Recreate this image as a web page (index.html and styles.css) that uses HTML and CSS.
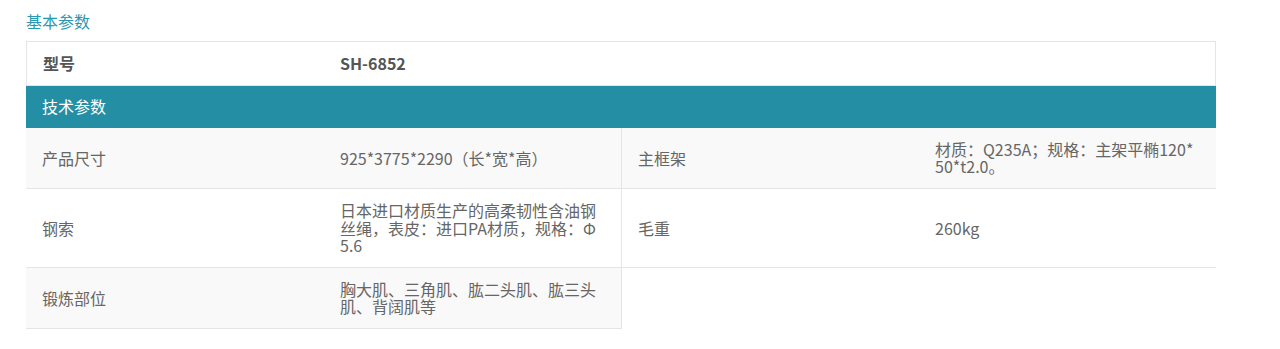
FILE: index.html
```html
<!DOCTYPE html>
<html lang="zh-CN">
<head>
<meta charset="utf-8">
<title>基本参数</title>
<link rel="stylesheet" href="styles.css">
</head>
<body>
<div class="page">
  <h2 class="title">基本参数</h2>
  <table class="params">
    <colgroup><col class="c-wide"><col class="c-wide"><col class="c-narrow"><col class="c-narrow"></colgroup>
    <tbody>
      <tr class="model">
        <th class="first">型号</th>
        <td class="last" colspan="3">SH-6852</td>
      </tr>
      <tr class="section">
        <th colspan="4">技术参数</th>
      </tr>
      <tr class="row alt">
        <th>产品尺寸</th>
        <td class="split">925*3775*2290（长*宽*高）</td>
        <th>主框架</th>
        <td>材质：Q235A；规格：主架平椭120*50*t2.0。</td>
      </tr>
      <tr class="row">
        <th>钢索</th>
        <td class="split">日本进口材质生产的高柔韧性含油钢丝绳，表皮：进口PA材质，规格：Φ5.6</td>
        <th>毛重</th>
        <td>260kg</td>
      </tr>
      <tr class="row alt">
        <th>锻炼部位</th>
        <td class="split">胸大肌、三角肌、肱二头肌、肱三头肌、背阔肌等</td>
        <td class="empty" colspan="2"></td>
      </tr>
    </tbody>
  </table>
</div>
</body>
</html>
```
FILE: styles.css
```css
html, body {
  margin: 0;
  padding: 0;
  background: #ffffff;
}

body {
  font-family: "Noto Sans CJK SC", "Microsoft YaHei", "Noto Sans", sans-serif;
  font-size: 16px;
  line-height: 17px;
  color: #666666;
}

.page {
  padding: 13px 26px 0 26px;
}

.title {
  margin: 0 0 11px 0;
  font-size: 16px;
  line-height: 17px;
  font-weight: normal;
  color: #2a98b1;
}

.params {
  width: 1190px;
  table-layout: fixed;
  border-collapse: separate;
  border-spacing: 0;
}

.params .c-wide {
  width: 298px;
}

.params .c-narrow {
  width: 297px;
}

.params th,
.params td {
  padding: 13px 16px;
  text-align: left;
  vertical-align: middle;
  font-weight: normal;
  word-break: break-all;
}

.model th,
.model td {
  border-top: 1px solid #e5e5e5;
  border-bottom: 1px solid #e5e5e5;
  font-weight: bold;
  color: #555555;
}

.model .first {
  border-left: 1px solid #e5e5e5;
}

.model .last {
  border-right: 1px solid #e5e5e5;
}

.section th {
  background: #248ea5;
  color: #ffffff;
  padding: 12px 16px 13px 16px;
}

.row th,
.row td {
  line-height: 17.2px;
  border-bottom: 1px solid #e5e5e5;
}

.row.alt th,
.row.alt td {
  background: #f9f9f9;
}

.row .split {
  border-right: 1px solid #e5e5e5;
}

.row .empty,
.row.alt .empty {
  background: #ffffff;
  border-bottom: none;
}
```
